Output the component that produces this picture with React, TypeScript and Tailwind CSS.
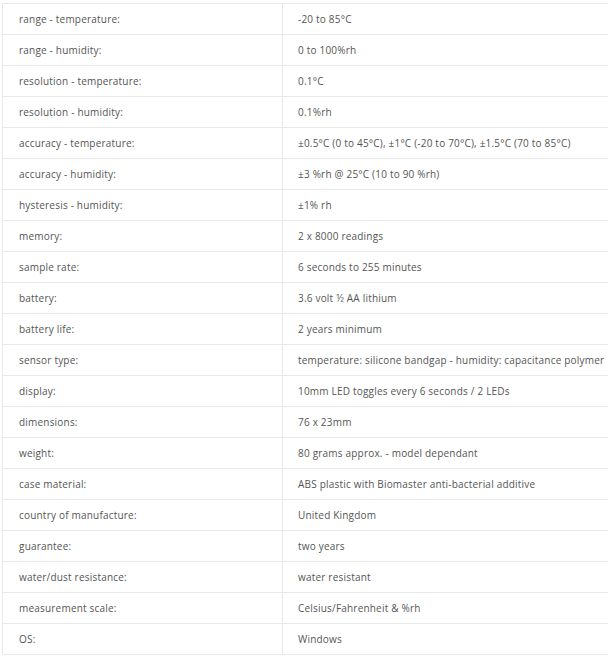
const specs: [string, string][] = [
  ["range - temperature:", "-20 to 85°C"],
  ["range - humidity:", "0 to 100%rh"],
  ["resolution - temperature:", "0.1°C"],
  ["resolution - humidity:", "0.1%rh"],
  ["accuracy - temperature:", "±0.5°C (0 to 45°C), ±1°C (-20 to 70°C), ±1.5°C (70 to 85°C)"],
  ["accuracy - humidity:", "±3 %rh @ 25°C (10 to 90 %rh)"],
  ["hysteresis - humidity:", "±1% rh"],
  ["memory:", "2 x 8000 readings"],
  ["sample rate:", "6 seconds to 255 minutes"],
  ["battery:", "3.6 volt ½ AA lithium"],
  ["battery life:", "2 years minimum"],
  ["sensor type:", "temperature: silicone bandgap - humidity: capacitance polymer"],
  ["display:", "10mm LED toggles every 6 seconds / 2 LEDs"],
  ["dimensions:", "76 x 23mm"],
  ["weight:", "80 grams approx. - model dependant"],
  ["case material:", "ABS plastic with Biomaster anti-bacterial additive"],
  ["country of manufacture:", "United Kingdom"],
  ["guarantee:", "two years"],
  ["water/dust resistance:", "water resistant"],
  ["measurement scale:", "Celsius/Fahrenheit & %rh"],
  ["OS:", "Windows"],
];

export default function App() {
  return (
    <div className="h-[660px] w-[608px] overflow-hidden bg-white pl-[2px] pt-[3px] font-['Open_Sans',sans-serif] text-[10px] tracking-[0.2px] text-[#555]">
      <div className="w-[620px] border-l border-t border-[#e8e8e8]">
        {specs.map(([label, value]) => (
          <div
            key={label}
            className="grid h-[31px] grid-cols-[280px_1fr] border-b border-[#e8e8e8]"
          >
            <div className="flex items-center border-r border-[#e8e8e8] pl-4">
              {label}
            </div>
            <div className="flex items-center whitespace-nowrap pl-[15px]">
              {value}
            </div>
          </div>
        ))}
      </div>
    </div>
  );
}
